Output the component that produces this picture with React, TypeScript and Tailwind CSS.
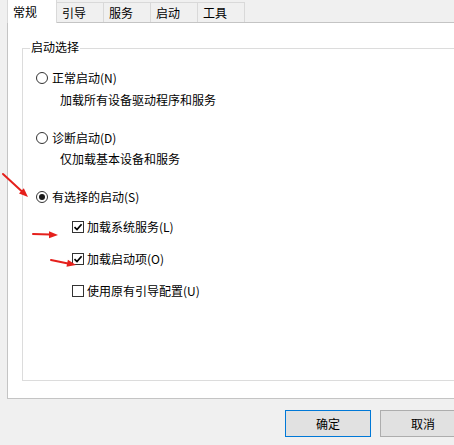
import React from "react";

const tabs = ["引导", "服务", "启动", "工具"];

function Radio({ checked }: { checked?: boolean }) {
  return (
    <span className="flex h-[12px] w-[12px] shrink-0 items-center justify-center rounded-full border border-[#333] bg-white">
      {checked && <span className="h-[6px] w-[6px] rounded-full bg-[#1a1a1a]" />}
    </span>
  );
}

function Check({ checked }: { checked?: boolean }) {
  return (
    <span className="flex h-[12px] w-[12px] shrink-0 items-center justify-center border border-[#333] bg-white">
      {checked && (
        <svg width="10" height="10" viewBox="0 0 10 10">
          <path d="M1.5 5.2 L4 7.6 L8.6 2.2" fill="none" stroke="#000" strokeWidth="1.7" />
        </svg>
      )}
    </span>
  );
}

export default function App() {
  return (
    <div className="relative h-[445px] w-[454px] overflow-hidden bg-[#f0f0f0] font-['Noto_Sans_CJK_SC',sans-serif] text-[12px] leading-none text-black">
      {/* tab strip */}
      <div className="flex h-[22px] items-end pl-[7px]">
        <div className="relative z-10 mb-[-1px] flex h-[24px] w-[50px] items-center border-l border-r border-t border-[#d9d9d9] bg-white pl-[5px]">
          常规
        </div>
        {tabs.map((t) => (
          <div key={t} className="flex h-[20px] w-[47px] items-center border-r border-t border-[#d9d9d9] bg-[#f0f0f0] pl-[5px]">
            {t}
          </div>
        ))}
      </div>

      {/* panel */}
      <div className="ml-[7px] h-[377px] w-[460px] border-b border-l border-t border-[#c4c4c4] bg-white pl-[14px] pt-[25px]">
        <div className="relative h-[333px] border border-[#dcdcdc] pl-[13px] pt-[19px]">
          <span className="absolute -top-[8px] left-[7px] bg-white px-[1px]">启动选择</span>

          <div className="flex h-[20px] items-center gap-[4px]">
            <Radio />
            <span>正常启动(N)</span>
          </div>
          <div className="mt-[2px] flex h-[20px] items-center pl-[24px]">加载所有设备驱动程序和服务</div>

          <div className="mt-[18px] flex h-[20px] items-center gap-[4px]">
            <Radio />
            <span>诊断启动(D)</span>
          </div>
          <div className="mt-[1px] flex h-[20px] items-center pl-[24px]">仅加载基本设备和服务</div>

          <div className="mt-[18px] flex h-[20px] items-center gap-[4px]">
            <Radio checked />
            <span>有选择的启动(S)</span>
          </div>

          <div className="mt-[10px] flex h-[20px] items-center gap-[3px] pl-[36px]">
            <Check checked />
            <span>加载系统服务(L)</span>
          </div>
          <div className="mt-[12px] flex h-[20px] items-center gap-[3px] pl-[36px]">
            <Check checked />
            <span>加载启动项(O)</span>
          </div>
          <div className="mt-[12px] flex h-[20px] items-center gap-[3px] pl-[36px]">
            <Check />
            <span>使用原有引导配置(U)</span>
          </div>
        </div>
      </div>

      {/* buttons */}
      <div className="mt-[11px] flex gap-[9px] pl-[285px]">
        <button className="flex h-[27px] w-[86px] shrink-0 items-center justify-center border border-[#0078d7] bg-[#e1e1e1]">
          确定
        </button>
        <button className="flex h-[27px] w-[86px] shrink-0 items-center justify-center border border-[#adadad] bg-[#e1e1e1]">
          取消
        </button>
      </div>

      {/* red annotation arrows */}
      <svg className="pointer-events-none absolute left-0 top-0" width="454" height="445">
        <g stroke="#e5201c" strokeWidth="2" fill="#e5201c" strokeLinecap="round">
          <line x1="3" y1="174" x2="22" y2="191.5" />
          <polygon points="28,197 19,193.5 23.8,188.3" stroke="none" />
          <line x1="33" y1="234" x2="50" y2="234.6" />
          <polygon points="58,235 49,231.2 49,238.2" stroke="none" />
          <line x1="51" y1="260" x2="68" y2="263.4" />
          <polygon points="76,265 66.5,266.7 67.9,259.8" stroke="none" />
        </g>
      </svg>
    </div>
  );
}
